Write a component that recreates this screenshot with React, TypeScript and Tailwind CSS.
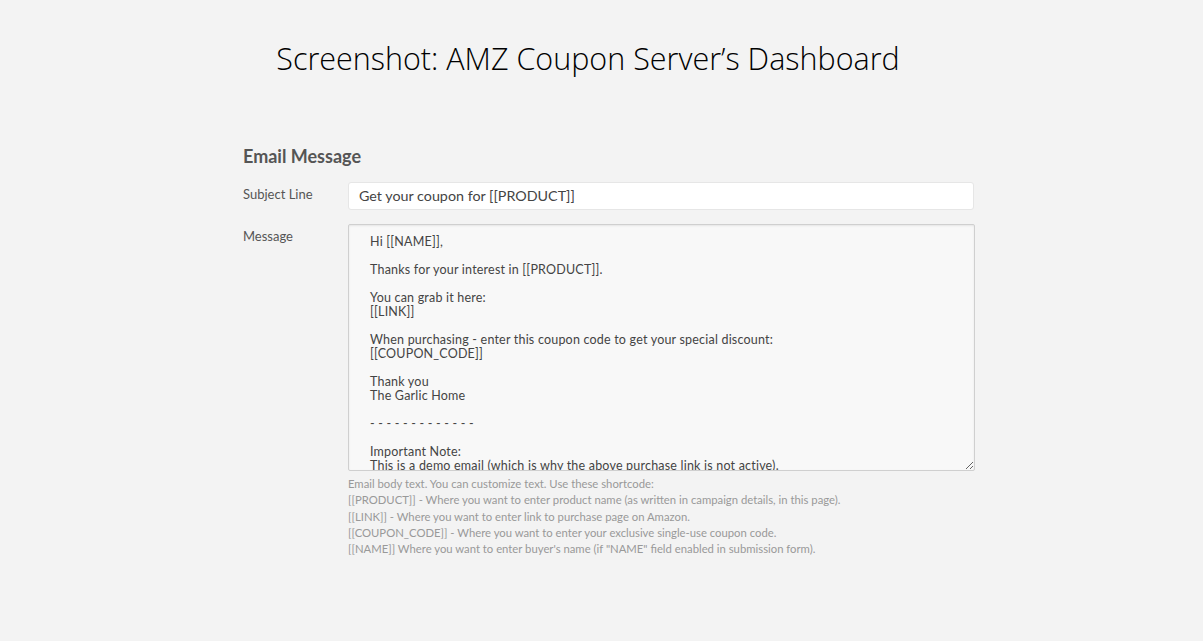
import React from "react";

const body = `Hi [[NAME]],

Thanks for your interest in [[PRODUCT]].

You can grab it here:
[[LINK]]

When purchasing - enter this coupon code to get your special discount:
[[COUPON_CODE]]

Thank you
The Garlic Home

- - - - - - - - - - - - -

Important Note:
This is a demo email (which is why the above purchase link is not active).
In real campaigns, the link will take your buyers to your product page.`;

export default function App() {
  return (
    <div className="min-h-[641px] w-full bg-[#f3f3f3] font-['Lato',sans-serif]">
      <div className="flex justify-center pt-[38px] pr-[27px]">
        <h1 className="font-['Open_Sans',sans-serif] text-[30.5px] font-light leading-[40px] text-black">
          Screenshot: AMZ Coupon Server’s Dashboard
        </h1>
      </div>
      <div className="pl-[243px] pt-[66px]">
        <h2 className="text-[18px] font-bold leading-[24px] text-[#555]">Email Message</h2>
        <div className="mt-[14px] flex">
          <div className="w-[105px] pt-[4px] text-[13px] leading-[16px] text-[#555]">Subject Line</div>
          <div className="flex h-[28px] w-[626px] items-center rounded-[3px] border border-[#e6e6e6] bg-white pl-[10px] text-[14.3px] text-[#444]">
            Get your coupon for [[PRODUCT]]
          </div>
        </div>
        <div className="mt-[14px] flex">
          <div className="w-[105px] pt-[4px] text-[13px] leading-[16px] text-[#555]">Message</div>
          <div className="flex flex-col">
            <textarea
              readOnly
              defaultValue={body}
              className="block h-[247px] w-[627px] resize overflow-hidden rounded-[2px] border border-[#cfcfcf] bg-[#f8f8f8] pl-[21px] pt-[10px] text-[12.5px] leading-[14px] tracking-[0.2px] text-[#444] shadow-[inset_0_1px_2px_rgba(0,0,0,0.08)] outline-none font-['Lato',sans-serif]"
            />
            <div className="mt-[5px] text-[11.3px] leading-[16.3px] text-[#999]">
              <div>Email body text. You can customize text. Use these shortcode:</div>
              <div>[[PRODUCT]] - Where you want to enter product name (as written in campaign details, in this page).</div>
              <div>[[LINK]] - Where you want to enter link to purchase page on Amazon.</div>
              <div>[[COUPON_CODE]] - Where you want to enter your exclusive single-use coupon code.</div>
              <div>[[NAME]] Where you want to enter buyer's name (if "NAME" field enabled in submission form).</div>
            </div>
          </div>
        </div>
      </div>
    </div>
  );
}
